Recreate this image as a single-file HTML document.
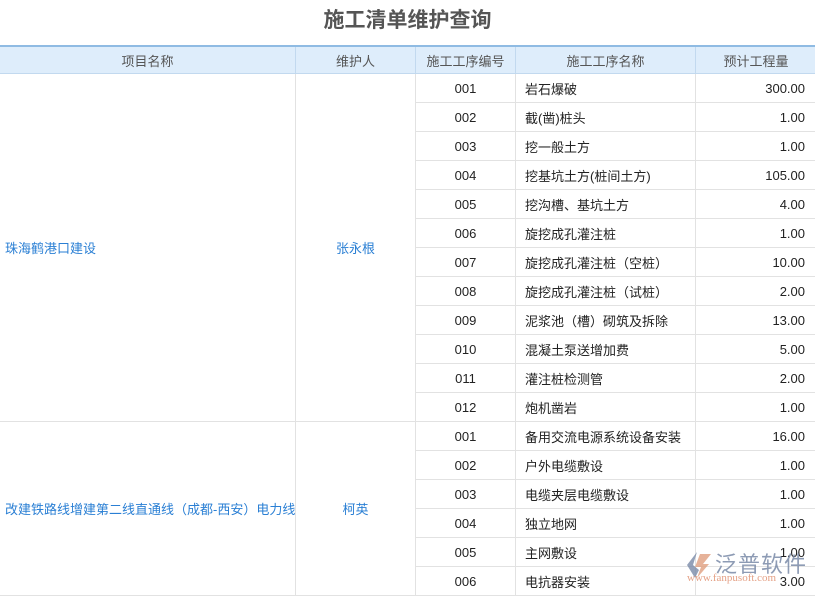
<!DOCTYPE html>
<html><head><meta charset="utf-8"><style>
body{margin:0;width:815px;height:597px;background:#fff;overflow:hidden;font-family:"Liberation Sans","Noto Sans CJK SC",sans-serif;position:relative}
.title{position:absolute;top:0;left:0;width:815px;height:45px;line-height:42px;text-align:center;font-size:21px;font-weight:bold;color:#555}
table{position:absolute;top:45px;left:-1px;border-collapse:collapse;table-layout:fixed;width:817px}
td,th{border:1px solid #e2e2e2;height:28px;padding:0;font-size:13px;color:#222;white-space:nowrap;overflow:hidden}
th{background:#deedfb;color:#555;font-weight:normal;border-color:#c2d9ef;border-top:2px solid #8fbbe3;height:26px}
.c{text-align:center}.l{padding-left:9px}.r{text-align:right;padding-right:11px}
.b{color:#2a7fd4}
.wm{position:absolute;left:683px;top:549px}
</style></head><body>
<div class="title">施工清单维护查询</div>
<table>
<colgroup><col style="width:296px"><col style="width:120px"><col style="width:100px"><col style="width:180px"><col style="width:121px"></colgroup>
<tr><th>项目名称</th><th>维护人</th><th>施工工序编号</th><th>施工工序名称</th><th>预计工程量</th></tr>
<tr><td rowspan="12" class="l b" style="padding-left:5px">珠海鹤港口建设</td><td rowspan="12" class="c b">张永根</td><td class="c">001</td><td class="l">岩石爆破</td><td class="r">300.00</td></tr>
<tr><td class="c">002</td><td class="l">截(凿)桩头</td><td class="r">1.00</td></tr>
<tr><td class="c">003</td><td class="l">挖一般土方</td><td class="r">1.00</td></tr>
<tr><td class="c">004</td><td class="l">挖基坑土方(桩间土方)</td><td class="r">105.00</td></tr>
<tr><td class="c">005</td><td class="l">挖沟槽、基坑土方</td><td class="r">4.00</td></tr>
<tr><td class="c">006</td><td class="l">旋挖成孔灌注桩</td><td class="r">1.00</td></tr>
<tr><td class="c">007</td><td class="l">旋挖成孔灌注桩（空桩）</td><td class="r">10.00</td></tr>
<tr><td class="c">008</td><td class="l">旋挖成孔灌注桩（试桩）</td><td class="r">2.00</td></tr>
<tr><td class="c">009</td><td class="l">泥浆池（槽）砌筑及拆除</td><td class="r">13.00</td></tr>
<tr><td class="c">010</td><td class="l">混凝土泵送增加费</td><td class="r">5.00</td></tr>
<tr><td class="c">011</td><td class="l">灌注桩检测管</td><td class="r">2.00</td></tr>
<tr><td class="c">012</td><td class="l">炮机凿岩</td><td class="r">1.00</td></tr>
<tr><td rowspan="6" class="b" style="padding-left:5px">改建铁路线增建第二线直通线（成都-西安）电力线</td><td rowspan="6" class="c b">柯英</td><td class="c">001</td><td class="l">备用交流电源系统设备安装</td><td class="r">16.00</td></tr>
<tr><td class="c">002</td><td class="l">户外电缆敷设</td><td class="r">1.00</td></tr>
<tr><td class="c">003</td><td class="l">电缆夹层电缆敷设</td><td class="r">1.00</td></tr>
<tr><td class="c">004</td><td class="l">独立地网</td><td class="r">1.00</td></tr>
<tr><td class="c">005</td><td class="l">主网敷设</td><td class="r">1.00</td></tr>
<tr><td class="c">006</td><td class="l">电抗器安装</td><td class="r">3.00</td></tr>
</table>
<div class="wm">
<svg width="30" height="30" viewBox="0 0 30 30" style="position:absolute;left:0;top:1px;opacity:.8"><path d="M14 2 L4 15 L12 28 L16 20 L10 15 Z" fill="#7a8aa8"/><path d="M17 4 L28 4 L20 14 L26 14 L14 28 L18 17 L12 17 Z" fill="#e0a080"/></svg>
<div style="position:absolute;left:32px;top:-2px;font-size:22px;color:#7a8aa8;opacity:.85;white-space:nowrap;letter-spacing:1px">泛普软件</div>
<div style="position:absolute;left:4px;top:23px;font-size:11px;font-family:'Liberation Serif',serif;color:#e09070;opacity:.85;white-space:nowrap">www.fanpusoft.com</div>
</div>
</body></html>
